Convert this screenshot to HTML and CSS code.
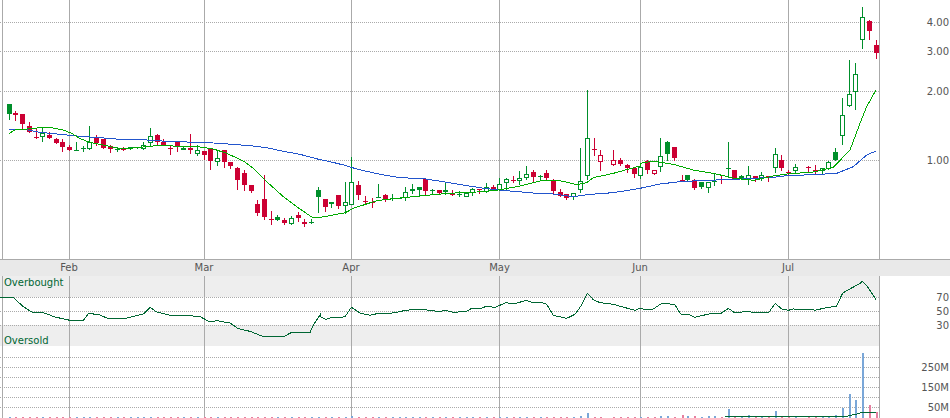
FILE: index.html
```html
<!DOCTYPE html>
<html lang="en">
  <head>
    <meta charset="UTF-8" />
    <title>Price chart</title>
    <link rel="stylesheet" href="styles.css">
  </head>
  <body>
    <div class="chart">
      <svg class="pane" id="pricePane" width="950" height="259"></svg>
      <svg class="pane date-axis" id="datePane" width="950" height="17"></svg>
      <svg class="pane" id="rsiPane" width="950" height="70"></svg>
      <svg class="pane" id="volPane" width="950" height="72"></svg>
    </div>
    <script src="chart.js"></script>
  </body>
</html>
```

FILE: styles.css
```css
body {
  margin: 0;
  background: #fff;
  overflow: hidden;
}
.chart {
  display: flex;
  flex-direction: column;
  width: 950px;
  height: 418px;
  overflow: hidden;
}
.pane {
  display: block;
  flex: none;
  shape-rendering: crispEdges;
}
.date-axis {
  background: #e9e9e9;
  border-top: 1px solid #aaa;
  box-sizing: border-box;
}
text {
  font-family: "DejaVu Sans", Verdana, sans-serif;
  font-size: 10px;
  fill: #555;
}
text.note {
  fill: #006633;
}
.band {
  fill: #eee;
}
.grid-v {
  stroke: #aaa;
  stroke-width: 1;
}
.grid-h {
  stroke: #aaa;
  stroke-width: 1;
  stroke-dasharray: 1 1;
}
.line {
  fill: none;
  stroke-width: 1;
}
.ma-fast {
  stroke: #00aa00;
}
.ma-slow {
  stroke: #2255cc;
}
.rsi,
.vol-avg {
  stroke: #006633;
}
.up {
  fill: #008f2b;
}
.down {
  fill: #cc0033;
}
.hollow {
  fill: #fff;
}
.vol-up {
  fill: #7aa7d8;
}
.vol-down {
  fill: #e67fa0;
}
```

FILE: chart.js
```js
const SVG_NS = 'http://www.w3.org/2000/svg';
const DAY_LINES = [2, 69, 204, 351, 499, 640, 788, 879];

function add(svg, tag, attrs, text) {
  const node = document.createElementNS(SVG_NS, tag);
  for (const key in attrs) node.setAttribute(key, attrs[key]);
  if (text) node.textContent = text;
  svg.appendChild(node);
  return node;
}

// Values were read at 3x, so each section keeps its own origin.
// Row: x, high, low, body top, body bottom, kind, volume height in px
// Kinds: F green filled, H green hollow, R red filled, r red hollow
const sections = [
  [0, 90, [
    [28,42,90,42,72,'F'],[46,63,93,69,75,'R'],[67,72,118,72,102,'R'],[88,96,129,108,126,'R'],
    [109,118,147,141,144,'R'],[127,112,156,129,141,'H'],[148,127,147,135,144,'R'],[169,144,162,147,159,'R'],
    [187,147,186,156,171,'R'],[208,165,183,171,180,'R'],[229,156,183,180,183,'F'],[250,168,186,174,177,'F'],
    [268,108,180,156,177,'H'],[289,135,168,144,159,'R'],[310,147,177,147,174,'R'],[331,165,189,168,177,'R'],
    [352,171,186,177,181,'F'],[370,171,183,174,180,'R'],[391,171,180,172,176,'F'],[412,170,176,171,175,'F'],
    [430,156,180,165,177,'H'],[451,114,168,138,159,'H'],[472,132,165,135,156,'R'],[490,147,168,156,165,'R'],
    [511,168,195,174,177,'R'],[532,153,186,153,171,'R'],[550,168,180,174,179,'F'],[571,132,192,174,180,'R'],
    [592,165,198,180,192,'H'],[613,183,210,183,195,'R'],[631,174,240,174,213,'R'],[652,180,228,205,217,'H'],
    [673,180,234,180,216,'R'],[691,216,237,216,228,'R'],[712,231,300,234,270,'R'],[733,240,303,249,285,'R'],
    [754,285,309,285,303,'R'],[772,330,378,342,369,'R'],[793,255,390,327,381,'R'],[814,363,405,387,390,'R'],
    [832,375,393,381,390,'F'],[853,384,405,390,399,'R'],[874,378,405,384,402,'H'],[895,366,396,375,384,'R'],
    [913,387,411,396,402,'R'],[934,387,402,396,399,'F'],[955,291,369,300,321,'F']
  ]],
  [320, 90, [
    [16,327,366,327,351,'R'],[34,336,354,336,342,'F'],[55,315,357,315,348,'R'],[76,276,372,336,347,'H'],
    [94,201,345,276,344,'H',2],[115,273,330,285,315,'R'],[136,318,345,333,336,'R'],[157,324,354,336,339,'R'],
    [175,282,324,321,324,'F'],[196,312,336,315,327,'R'],[217,312,333,324,327,'F'],[238,323,327,324,326,'F'],
    [256,291,333,307,323,'H'],[277,282,312,297,302,'F'],[298,291,318,291,300,'F'],[316,267,318,267,303,'R'],
    [337,297,312,300,303,'F'],[358,300,312,300,309,'R'],[376,279,315,300,306,'F'],[397,300,318,309,315,'R'],
    [418,303,321,312,315,'F'],[439,306,321,309,320,'H'],[457,294,318,298,310,'H'],[478,297,312,297,300,'R'],
    [499,280,309,291,307,'H'],[520,285,303,292,296,'R'],[538,264,303,283,300,'H'],[559,264,300,268,278,'H'],
    [580,258,279,271,274,'R'],[598,243,285,264,272,'H'],[619,228,270,253,264,'H'],[640,240,276,246,261,'R'],
    [661,255,271,258,261,'F'],[679,240,273,249,264,'R'],[700,267,312,273,303,'R'],[721,297,321,306,318,'R'],
    [739,312,330,312,324,'R'],[760,309,330,310,322,'H'],[781,174,309,274,299,'H',2],[802,0,270,145,257,'H',5],
    [822,144,198,177,180,'R'],[841,180,243,195,216,'r'],[880,180,228,210,225,'r'],[901,204,228,210,222,'R'],
    [922,222,249,225,234,'R'],[943,234,264,234,252,'R']
  ]],
  [640, 0, [
    [1,490,537,500,528,'H'],[22,481,522,484,510,'R'],[43,510,525,511,523,'r'],[61,414,516,468,502,'H',2],
    [82,423,483,426,462,'F',2],[103,441,483,441,473,'R'],[125,525,546,540,543,'R',3],[142,525,546,525,540,'F',2],
    [163,537,570,540,564,'R',2],[184,546,567,546,561,'F'],[205,546,579,547,563,'H',2],[223,520,558,543,546,'F',2],
    [244,528,552,537,540,'R'],[265,426,534,504,507,'F',9],[283,510,540,510,537,'R'],[304,525,540,528,538,'F'],
    [325,498,555,526,540,'H',3],[346,528,546,528,537,'R',2],[364,516,542,526,537,'H',2],[385,528,546,528,535,'R',2],
    [406,444,519,463,503,'H',7],[424,465,513,480,503,'R',2],[445,510,525,516,520,'R',2],[466,492,519,502,514,'H',2],
    [505,498,520,501,504,'R',2],[526,495,522,510,514,'R',2],[547,505,525,505,514,'H',2],[565,484,510,487,507,'H',2],
    [586,444,483,456,480,'F',3],[607,294,435,346,407,'H',10],[628,180,321,283,317,'H',24],[646,189,330,223,277,'H',18],
    [667,21,147,52,121,'H',65],[688,60,120,63,92,'R',13],[709,120,177,135,158,'R',6]
  ]]
];

const maFast = [
  [0,90,'28,130 45,120 80,117 120,113 155,113 190,120 215,130 240,146 270,157 310,165 350,174 400,174 440,170 480,166 540,169 600,171 640,177 680,190 730,213 760,235 800,275 850,320 890,350 935,381 960,382'],
  [320,90,'0,382 40,375 76,368 100,355 170,332 240,324 300,318 350,313 420,308 470,306 530,301 600,288 660,273 720,272 770,284 800,278 820,263 880,250 960,228'],
  [640,0,'0,490 40,483 100,493 160,510 220,520 280,534 340,541 400,528 440,522 520,516 580,502 630,450 660,370 680,320 708,270']
];
const maSlow = [
  [0,90,'28,118 85,120 120,127 180,133 240,139 300,143 360,148 440,150 500,154 560,156 640,159 700,163 760,168 800,173 850,184 900,193 960,209'],
  [320,90,'0,209 30,215 75,226 110,237 180,253 240,263 310,266 370,275 440,287 500,296 560,302 650,310 700,312 760,320 810,313 880,308 960,295'],
  [640,0,'0,565 60,552 120,545 180,542 280,538 400,532 440,527 520,524 590,520 640,500 680,465 708,453']
];
const rsi = [
  [0,-21,'0,129 40,128 70,155 95,171 130,173 165,186 210,196 250,196 265,176 295,178 320,189 380,189 430,177 451,157 470,171 510,181 560,181 600,185 630,201 650,197 690,204 715,221 750,229 785,243 855,243 875,232 930,233 940,210 960,180'],
  [320,-21,'0,185 18,193 35,187 60,189 76,184 94,157 120,174 150,181 175,175 200,177 240,170 255,166 290,163 335,166 355,170 375,166 400,172 440,169 455,160 480,162 498,154 525,157 558,143 580,147 620,136 640,144 665,142 680,148 700,181 740,190 765,178 785,150 802,115 820,134 840,143 880,148 930,162 945,166 960,160'],
  [640,-21,'0,160 10,162 40,162 62,147 80,145 105,150 122,177 145,178 165,187 210,176 245,174 265,160 285,174 315,170 385,174 406,145 425,162 445,166 460,162 515,163 525,166 550,160 590,153 608,114 660,85 667,79 680,92 708,133']
];
const volAvg = [[640,-91,'255,484 620,484 650,477 665,472 708,472']];

function drawLine(svg, parts, cls) {
  const points = parts.map(([ox, oy, pts]) =>
    pts.split(' ').map((p) => {
      const [x, y] = p.split(',').map(Number);
      return `${ox + x / 3},${oy + y / 3}`;
    }).join(' ')
  ).join(' ');
  add(svg, 'polyline', { class: `line ${cls}`, points });
}

function hLine(svg, y) {
  add(svg, 'line', { class: 'grid-h', x1: 0, x2: 879, y1: y + 0.5, y2: y + 0.5 });
}

function vLines(svg, height) {
  DAY_LINES.forEach((x) => {
    add(svg, 'line', { class: 'grid-v', x1: x + 0.5, x2: x + 0.5, y1: 0, y2: height });
  });
}

function label(svg, y, str) {
  add(svg, 'text', { x: 949, y, 'text-anchor': 'end' }, str);
}

// price pane
const price = document.getElementById('pricePane');
[22, 51, 91, 160].forEach((y) => hLine(price, y));
vLines(price, 259);
sections.forEach(([ox, oy, rows]) => {
  rows.forEach(([zx, high, low, top, bot, kind]) => {
    const x = Math.round(ox + zx / 3);
    const cls = kind === 'F' || kind === 'H' ? 'up' : 'down';
    const y1 = oy + Math.round(top / 3);
    const h = Math.max(1, Math.round(bot / 3) - Math.round(top / 3));
    add(price, 'rect', { class: cls, x, width: 1, y: oy + Math.round(high / 3), height: Math.round((low - high) / 3) });
    add(price, 'rect', { class: cls, x: x - 2, width: 5, y: y1, height: h });
    if (kind === 'H' || kind === 'r') {
      add(price, 'rect', { class: 'hollow', x: x - 1, width: 3, y: y1 + 1, height: Math.max(0, h - 2) });
    }
  });
});
drawLine(price, maSlow, 'ma-slow');
drawLine(price, maFast, 'ma-fast');
label(price, 26, '4.00');
label(price, 55, '3.00');
label(price, 95, '2.00');
label(price, 164, '1.00');

// date axis, svg starts under the 1px border
const dates = document.getElementById('datePane');
[['Feb', 69], ['Mar', 204], ['Apr', 351], ['May', 499.5], ['Jun', 640], ['Jul', 788]].forEach(([month, x]) => {
  add(dates, 'text', { x, y: 11, 'text-anchor': 'middle' }, month);
});

// rsi pane
const rsiPane = document.getElementById('rsiPane');
add(rsiPane, 'rect', { class: 'band', x: 0, y: 0, width: 879, height: 21 });
add(rsiPane, 'rect', { class: 'band', x: 0, y: 49, width: 879, height: 21 });
[21, 35, 49].forEach((y) => hLine(rsiPane, y));
vLines(rsiPane, 70);
drawLine(rsiPane, rsi, 'rsi');
add(rsiPane, 'text', { class: 'note', x: 4, y: 10 }, 'Overbought');
add(rsiPane, 'text', { class: 'note', x: 4, y: 68 }, 'Oversold');
label(rsiPane, 25, '70');
label(rsiPane, 39, '50');
label(rsiPane, 53, '30');

// volume pane
const vol = document.getElementById('volPane');
[11, 21, 31, 41, 51, 61].forEach((y) => hLine(vol, y));
vLines(vol, 72);
sections.forEach(([ox, , rows]) => {
  rows.forEach(([zx, , , , , kind, height = 1]) => {
    const cls = kind === 'F' || kind === 'H' ? 'vol-up' : 'vol-down';
    add(vol, 'rect', { class: cls, x: Math.round(ox + zx / 3), width: 2, y: 72 - height, height });
  });
});
drawLine(vol, volAvg, 'vol-avg');
label(vol, 25, '250M');
label(vol, 45, '150M');
label(vol, 65, '50M');
```
